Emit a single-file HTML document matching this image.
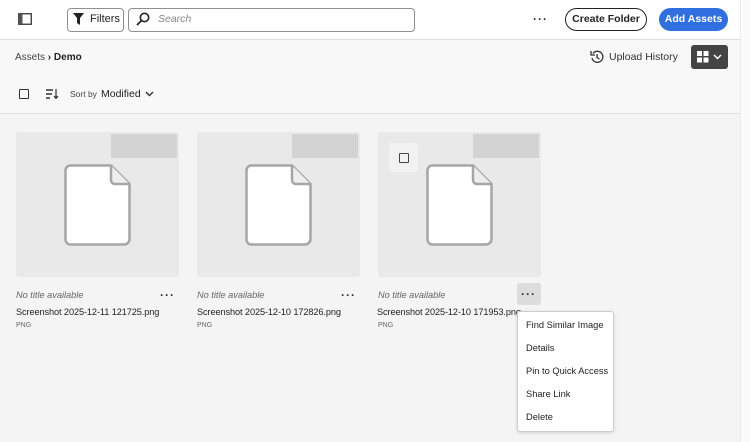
<!DOCTYPE html>
<html><head><meta charset="utf-8"><style>
*{box-sizing:border-box;margin:0;padding:0}
body{width:750px;height:442px;overflow:hidden;background:#f4f4f4;font-family:"Liberation Sans",sans-serif;color:#222;position:relative}
.abs{position:absolute;white-space:nowrap}
.hdr{left:0;top:0;width:740px;height:40px;background:#fff;border-bottom:1px solid #e0e0e0}
.strip{left:740px;top:0;width:10px;height:442px;background:#fbfbfb;border-left:1px solid #ececec}
.tb{left:0;top:40px;width:740px;height:74px;background:#f8f8f8;border-bottom:1px solid #e3e3e3}
.btn{border:1px solid #909090;border-radius:4px;background:#fff;font-size:12px}
.card{width:163px;height:145px;background:#e9e9e9;border-radius:3px}
.card .g{position:absolute;right:2px;top:2px;width:66px;height:24px;background:#d3d3d3}
.card svg{position:absolute;left:48px;top:32px}
.nt{font-size:9.2px;font-style:italic;color:#666}
.fn{font-size:9.2px;color:#222;letter-spacing:-0.1px}
.pn{font-size:7px;color:#666}
.dots{font-size:12px;font-weight:bold;letter-spacing:1px;color:#333}
.menu{left:517px;top:311px;width:97px;height:121px;background:#fff;border:1px solid #ccc;border-radius:3px;box-shadow:0 1px 3px rgba(0,0,0,.15)}
.menu div{position:absolute;left:8px;font-size:9.3px;color:#222;white-space:nowrap}
</style></head><body>
<div class="abs hdr"></div>
<div class="abs strip"></div>
<div class="abs tb"></div>
<svg class="abs" style="left:18px;top:13px" width="14" height="12"><rect x="0.75" y="0.75" width="12.5" height="10.5" fill="none" stroke="#333" stroke-width="1.3"/><rect x="1" y="1" width="3.5" height="10" fill="#555"/></svg>
<div class="abs btn" style="left:67px;top:8px;width:57px;height:24px"></div>
<svg class="abs" style="left:73px;top:13px" width="11" height="13"><path d="M0 0H11L7 5V12L4 10V5Z" fill="#222"/></svg>
<div class="abs" style="left:90px;top:13px;font-size:11px">Filters</div>
<div class="abs btn" style="left:128px;top:8px;width:287px;height:24px"></div>
<svg class="abs" style="left:136px;top:12px" width="14" height="14"><circle cx="8.5" cy="5.5" r="4.2" fill="none" stroke="#222" stroke-width="1.6"/><path d="M5.5 8.5L1 13" stroke="#222" stroke-width="1.8"/></svg>
<div class="abs" style="left:158px;top:13px;font-size:10.5px;font-style:italic;color:#888">Search</div>
<div class="abs dots" style="left:533px;top:12px">···</div>
<div class="abs" style="left:565px;top:8px;width:82px;height:23px;border:1.5px solid #222;border-radius:12px;background:#fff;font-size:10.5px;font-weight:bold;text-align:center;line-height:20px">Create Folder</div>
<div class="abs" style="left:659px;top:8px;width:69px;height:23px;border-radius:12px;background:#2f6fe0;color:#fff;font-size:10.5px;font-weight:bold;text-align:center;line-height:23px">Add Assets</div>
<div class="abs" style="left:15px;top:52px;font-size:10px;color:#444">Assets <b style="color:#222">›</b> <b style="color:#222">Demo</b></div>
<svg class="abs" style="left:590px;top:50px" width="14" height="14"><path d="M3 3.5A5.5 5.5 0 1 1 2 8" fill="none" stroke="#333" stroke-width="1.3"/><path d="M1 1V5H5" fill="none" stroke="#333" stroke-width="1.3"/><path d="M7 4V7.5L9.5 9" fill="none" stroke="#333" stroke-width="1.3"/></svg>
<div class="abs" style="left:609px;top:51px;font-size:10.5px;color:#333">Upload History</div>
<div class="abs" style="left:691px;top:45px;width:37px;height:24px;background:#444;border-radius:3px"></div>
<svg class="abs" style="left:697px;top:51px" width="12" height="12"><rect x="0" y="0" width="5" height="5" fill="#fff"/><rect x="6.5" y="0" width="5" height="5" fill="#fff"/><rect x="0" y="6.5" width="5" height="5" fill="#fff"/><rect x="6.5" y="6.5" width="5" height="5" fill="#fff"/></svg>
<svg class="abs" style="left:713px;top:54px" width="9" height="6"><path d="M1 1L4.5 4.5L8 1" fill="none" stroke="#fff" stroke-width="1.5"/></svg>
<div class="abs" style="left:19px;top:89px;width:10px;height:10px;border:1.5px solid #333;border-radius:1px"></div>
<svg class="abs" style="left:46px;top:89px" width="13" height="10"><path d="M0 1H7M0 5H6M0 9H4" stroke="#333" stroke-width="1.4"/><path d="M10 0V9M8 7L10 9.5L12 7" stroke="#333" stroke-width="1.2" fill="none"/></svg>
<div class="abs" style="left:70px;top:89px;font-size:8.5px;color:#444">Sort by</div>
<div class="abs" style="left:101px;top:88px;font-size:10.5px;color:#222">Modified</div>
<svg class="abs" style="left:145px;top:91px" width="9" height="6"><path d="M1 1L4.5 4.5L8 1" fill="none" stroke="#333" stroke-width="1.4"/></svg>

<div class="abs card" style="left:16px;top:132px"><div class="g"></div><svg width="67" height="82"><path d="M6 1.5H47L65.5 20V75A5.5 5.5 0 0 1 60 80.5H6A5 5 0 0 1 1.5 75V6.5A5 5 0 0 1 6 1.5Z" fill="#fff" stroke="#a6a6a6" stroke-width="2.5"/><path d="M47 1.5V16A4 4 0 0 0 51 20H65.5" fill="#eee" stroke="#a6a6a6" stroke-width="2.5"/></svg></div>
<div class="abs card" style="left:197px;top:132px"><div class="g"></div><svg width="67" height="82"><path d="M6 1.5H47L65.5 20V75A5.5 5.5 0 0 1 60 80.5H6A5 5 0 0 1 1.5 75V6.5A5 5 0 0 1 6 1.5Z" fill="#fff" stroke="#a6a6a6" stroke-width="2.5"/><path d="M47 1.5V16A4 4 0 0 0 51 20H65.5" fill="#eee" stroke="#a6a6a6" stroke-width="2.5"/></svg></div>
<div class="abs card" style="left:378px;top:132px"><div class="g"></div><div style="position:absolute;left:11px;top:11px;width:29px;height:29px;background:#f2f2f2;border-radius:3px"><div style="position:absolute;left:10px;top:10px;width:10px;height:10px;border:1.3px solid #444;border-radius:1px"></div></div><svg width="67" height="82"><path d="M6 1.5H47L65.5 20V75A5.5 5.5 0 0 1 60 80.5H6A5 5 0 0 1 1.5 75V6.5A5 5 0 0 1 6 1.5Z" fill="#fff" stroke="#a6a6a6" stroke-width="2.5"/><path d="M47 1.5V16A4 4 0 0 0 51 20H65.5" fill="#eee" stroke="#a6a6a6" stroke-width="2.5"/></svg></div>

<div class="abs nt" style="left:16px;top:290px">No title available</div>
<div class="abs dots" style="left:160px;top:288px">···</div>
<div class="abs fn" style="left:16px;top:307px">Screenshot 2025-12-11 121725.png</div>
<div class="abs pn" style="left:16px;top:322px">PNG</div>
<div class="abs nt" style="left:197px;top:290px">No title available</div>
<div class="abs dots" style="left:341px;top:288px">···</div>
<div class="abs fn" style="left:197px;top:307px">Screenshot 2025-12-10 172826.png</div>
<div class="abs pn" style="left:197px;top:322px">PNG</div>
<div class="abs nt" style="left:378px;top:290px">No title available</div>
<div class="abs" style="left:517px;top:283px;width:24px;height:22px;background:#dcdcdc;border-radius:3px"></div>
<div class="abs dots" style="left:521px;top:287px">···</div>
<div class="abs fn" style="left:377px;top:307px">Screenshot 2025-12-10 171953.png</div>
<div class="abs pn" style="left:378px;top:322px">PNG</div>
<div class="abs menu">
<div style="top:8px">Find Similar Image</div>
<div style="top:31px">Details</div>
<div style="top:54px">Pin to Quick Access</div>
<div style="top:77px">Share Link</div>
<div style="top:100px">Delete</div>
</div>
</body></html>
